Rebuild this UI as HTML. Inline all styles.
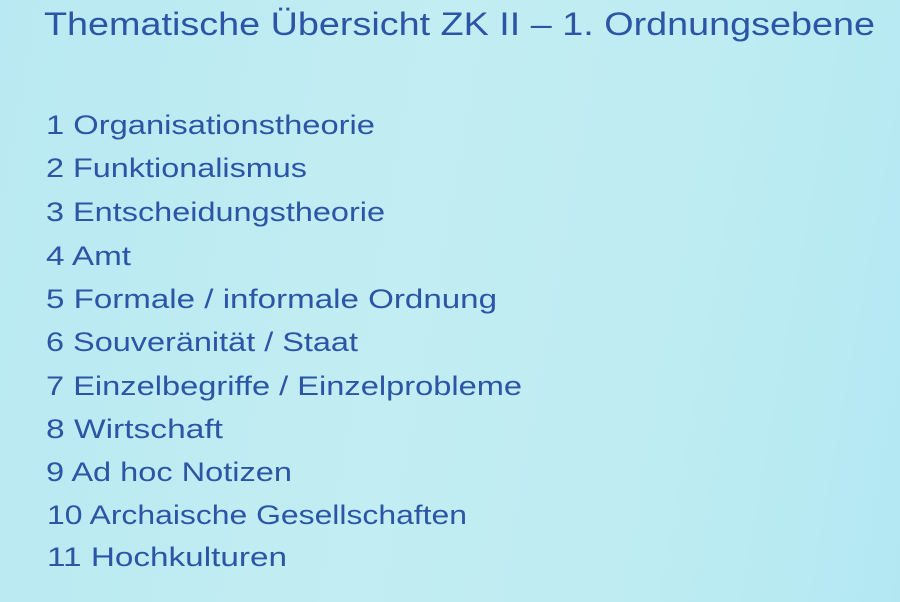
<!DOCTYPE html>
<html><head><meta charset="utf-8">
<style>
html,body{margin:0;padding:0;width:900px;height:602px;overflow:hidden}
body{background:linear-gradient(100deg,#b9e9f2 0%,#c2edf2 45%,#bdecf2 75%,#b3e8f3 100%)}
svg{display:block}
text{font-family:"Liberation Sans",sans-serif;fill:#2c55a6}
</style></head><body>
<svg width="900" height="602" viewBox="0 0 900 602">
<text x="44" y="35" font-size="32" textLength="831" lengthAdjust="spacingAndGlyphs" fill="#2a4d9e">Thematische Übersicht ZK II – 1. Ordnungsebene</text>
<g font-size="27">
<text x="46" y="134" textLength="329" lengthAdjust="spacingAndGlyphs">1 Organisationstheorie</text>
<text x="46" y="177" textLength="261" lengthAdjust="spacingAndGlyphs">2 Funktionalismus</text>
<text x="46" y="221" textLength="339" lengthAdjust="spacingAndGlyphs">3 Entscheidungstheorie</text>
<text x="46" y="265" textLength="85" lengthAdjust="spacingAndGlyphs">4 Amt</text>
<text x="46" y="308" textLength="451" lengthAdjust="spacingAndGlyphs">5 Formale / informale Ordnung</text>
<text x="46" y="351" textLength="312" lengthAdjust="spacingAndGlyphs">6 Souveränität / Staat</text>
<text x="46" y="395" textLength="476" lengthAdjust="spacingAndGlyphs">7 Einzelbegriffe / Einzelprobleme</text>
<text x="46" y="438" textLength="177" lengthAdjust="spacingAndGlyphs">8 Wirtschaft</text>
<text x="46" y="481" textLength="246" lengthAdjust="spacingAndGlyphs">9 Ad hoc Notizen</text>
<text x="47" y="524" textLength="420" lengthAdjust="spacingAndGlyphs">10 Archaische Gesellschaften</text>
<text x="47" y="566" textLength="240" lengthAdjust="spacingAndGlyphs">11 Hochkulturen</text>
</g>
</svg>
</body></html>
